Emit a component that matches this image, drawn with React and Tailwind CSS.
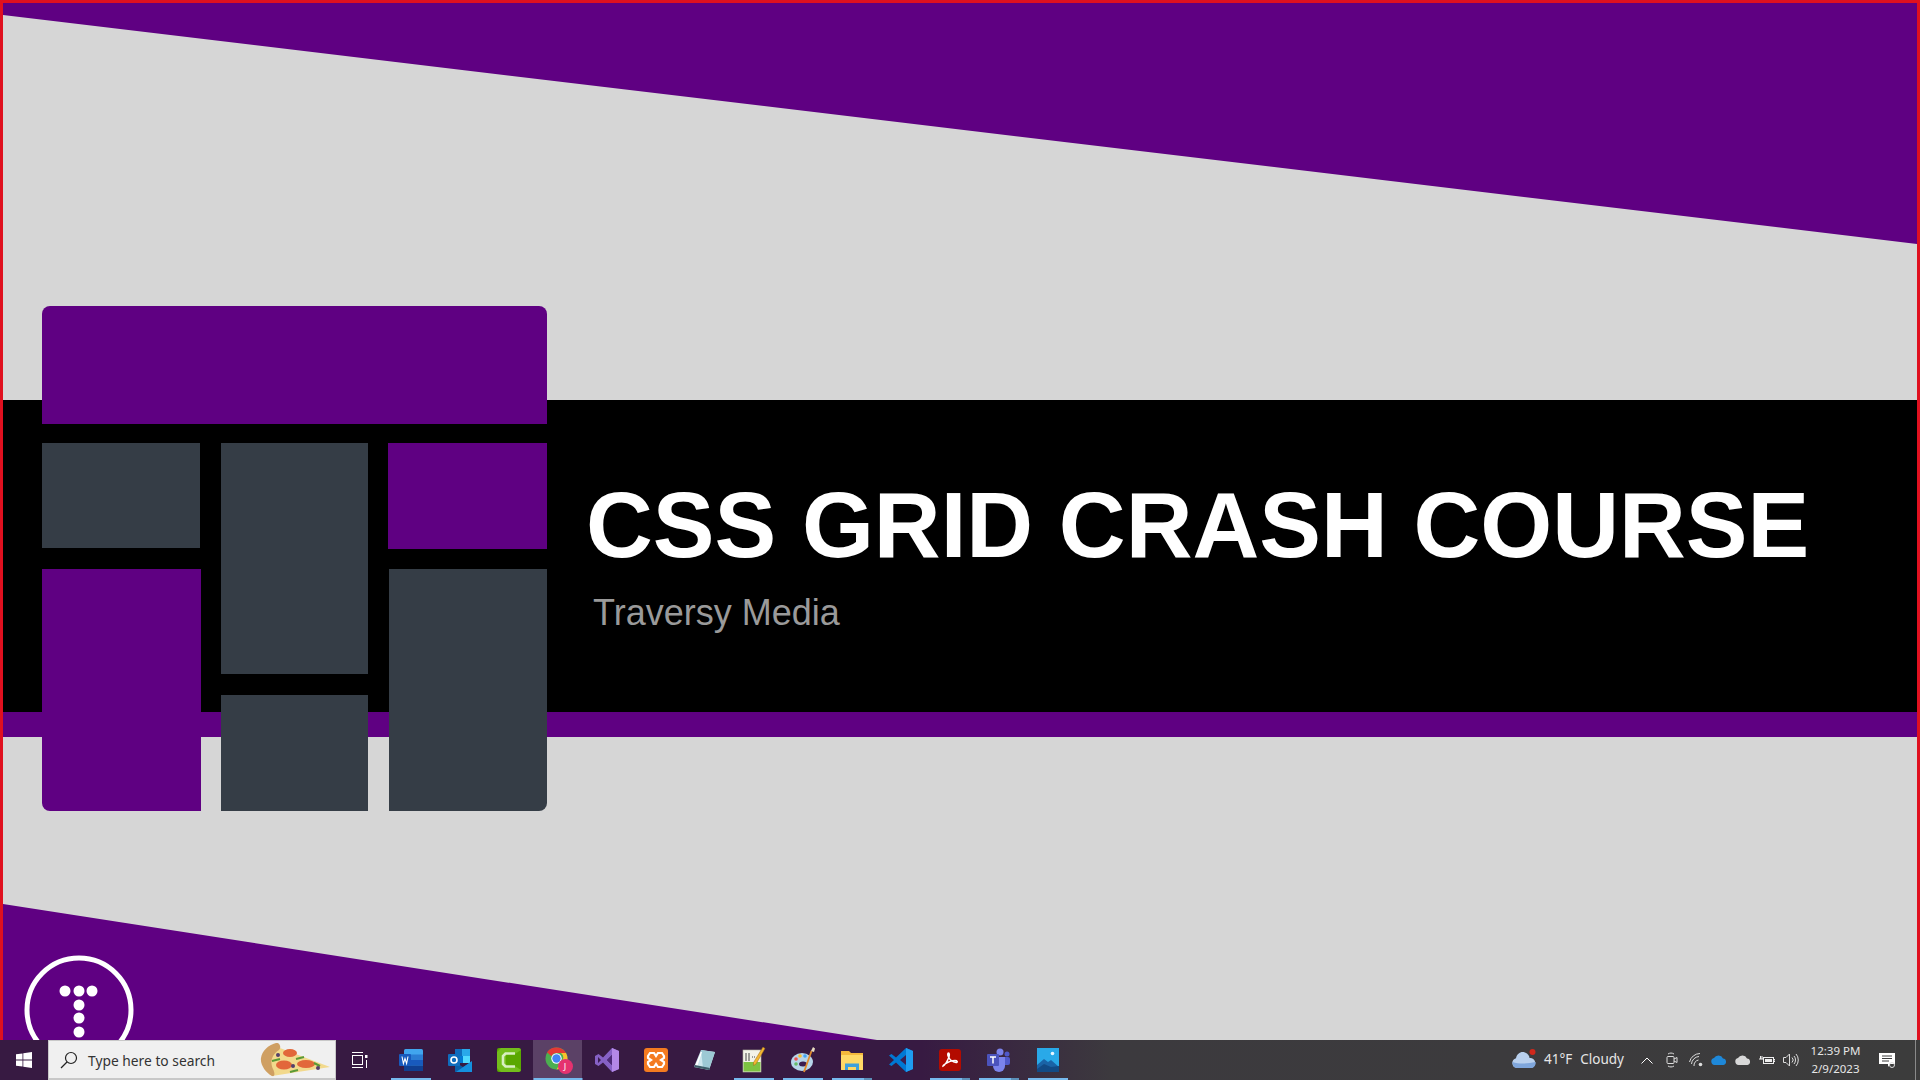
import React from "react";

const Ul = ({ c = "w-[40px]", split }) => (
  <div className={`absolute bottom-0 left-1/2 -translate-x-1/2 flex h-[2px] ${c}`}>
    <div className="flex-1 bg-[#76b9ed]" />
    {split && <div className="w-[8px] bg-[#5b8fb8]" />}
  </div>
);

const Btn = ({ children, line, split, active, w = "w-[49px]" }) => (
  <div className={`relative flex h-full shrink-0 items-center justify-center ${w} ${active ? "bg-[#5b4166]" : ""}`}>
    {children}
    {line && <Ul split={split} c={active ? "w-full" : "w-[40px]"} />}
  </div>
);

const Word = () => (
  <svg width="24" height="22" viewBox="0 0 24 22">
    <rect x="5" y="0" width="19" height="22" rx="1.5" fill="#41a5ee" />
    <rect x="5" y="5.5" width="19" height="5.5" fill="#2b7cd3" />
    <rect x="5" y="11" width="19" height="5.5" fill="#185abd" />
    <rect x="5" y="16.5" width="19" height="5.5" fill="#103f91" />
    <rect x="0" y="5" width="12" height="12" rx="1" fill="#185abd" />
    <path d="M2 7.5l1.4 7 1.6-5 1.6 5 1.4-7" transform="translate(1 0)" fill="none" stroke="#fff" strokeWidth="1.1" />
  </svg>
);
const Outlook = () => (
  <svg width="24" height="23" viewBox="0 0 24 23">
    <rect x="7" y="0" width="15" height="14" fill="#0f6cbd" />
    <rect x="14" y="0" width="8" height="7" fill="#28a8ea" />
    <rect x="7" y="7" width="8" height="7" fill="#0078d4" />
    <rect x="15" y="7" width="7" height="7" fill="#50d9ff" />
    <path d="M7 13l8 5 9-5.500V23H7z" fill="#0a5ea8" />
    <path d="M24 12v11H8z" fill="#1490df" />
    <rect x="0" y="5" width="12" height="12" rx="1" fill="#0f6cbd" />
    <circle cx="6" cy="11" r="3" fill="none" stroke="#fff" strokeWidth="1.600" />
  </svg>
);
const Camtasia = () => (
  <svg width="24" height="24" viewBox="0 0 24 24">
    <rect width="24" height="24" rx="2" fill="#5aa700" />
    <path d="M4 0h18l2 2-6 4H10l-1 2v8l1 2h8l6 4-2 2H4l-4-4V4z" fill="#73bd1c" />
    <path d="M18 5.500H8.500L6 8v8l2.500 2.500H18" fill="none" stroke="#d9efc2" strokeWidth="2.600" />
  </svg>
);
const Chrome = () => (
  <svg width="26" height="26" viewBox="0 0 26 26">
    <circle cx="11.500" cy="11.500" r="11" fill="#4caf50" />
    <path d="M11.500.5a11 11 0 0 1 9.500 5.500H11.500a5.500 5.500 0 0 0-5 3.200L2 5.200A11 11 0 0 1 11.500.5z" fill="#e53935" />
    <path d="M21 6a11 11 0 0 1-9.500 16.500L16 15a5.500 5.500 0 0 0 0-9z" fill="#fbc02d" />
    <circle cx="11.500" cy="11.500" r="5.200" fill="#fff" />
    <circle cx="11.500" cy="11.500" r="4.200" fill="#4285f4" />
  </svg>
);
const VS = () => (
  <svg width="24" height="24" viewBox="0 0 24 24">
    <path d="M17 0l7 3v18l-7 3-9-9.500-4.500 3.500L0 16V8l3.500-2L8 9.500z" fill="#8661c5" />
    <path d="M17 0l7 3v18l-7 3z" fill="#b388e6" />
    <path d="M17 7l-5 5 5 5zM3 9v6l3-3z" fill="#3a1d50" />
    <path d="M17 7v10l-5-5z" fill="#4d2a78" />
  </svg>
);
const Xampp = () => (
  <svg width="24" height="24" viewBox="0 0 24 24">
    <rect width="24" height="24" rx="3" fill="#f47b20" />
    <path d="M6 5h4l2 3 2-3h4l2 3v2l-3 2 3 2v2l-2 3h-4l-2-3-2 3H6l-2-3v-2l3-2-3-2V8z" fill="none" stroke="#fff" strokeWidth="2.200" />
  </svg>
);
const Notes = () => (
  <svg width="24" height="24" viewBox="0 0 24 24">
    <path d="M8 2l14 2-6 18L1 19z" fill="#cde7ee" />
    <path d="M8 2l14 2-6 18-6-2z" fill="#9cc9d4" />
    <path d="M2 18l6-14 1 0-5 15z" fill="#fff" />
    <path d="M1 19l15 3 1-2-15-3z" fill="#3c5e69" />
  </svg>
);
const Notepad = () => (
  <svg width="24" height="26" viewBox="0 0 24 26">
    <rect x="1" y="3" width="18" height="22" fill="#f3f3e8" stroke="#b5b5a0" strokeWidth="0.600" />
    <rect x="1.500" y="15" width="17" height="9.500" fill="#7dc242" />
    <path d="M4 6v8M7 6v8" stroke="#444" strokeWidth="1" />
    <path d="M10 10h4" stroke="#444" strokeWidth="1" strokeDasharray="1 1" />
    <path d="M21 0l2 1.500L14 17l-2.500 1.500 0-3z" fill="#f2b632" stroke="#9c6a18" strokeWidth="0.500" />
  </svg>
);
const Paint = () => (
  <svg width="24" height="26" viewBox="0 0 24 26">
    <ellipse cx="11" cy="15" rx="11" ry="9" fill="#b7d5ea" />
    <ellipse cx="12" cy="17" rx="4" ry="2.500" fill="#3a1d50" />
    <circle cx="5" cy="12" r="1.800" fill="#ef5350" />
    <circle cx="9" cy="9" r="1.800" fill="#fbc02d" />
    <circle cx="5" cy="17" r="1.800" fill="#66bb6a" />
    <circle cx="14" cy="9" r="1.800" fill="#42a5f5" />
    <path d="M20.500 4L13 25" stroke="#e08a2c" strokeWidth="1.800" />
    <path d="M20 4l2-4 2 1.500-1 3.500z" fill="#e8dcc0" />
  </svg>
);
const Folder = () => (
  <svg width="22" height="20" viewBox="0 0 22 20">
    <path d="M0 1h8l2 2h12v3H0z" fill="#f5b93c" />
    <rect y="5" width="22" height="15" rx="0.500" fill="#ffd966" />
    <path d="M4 20v-6.500h14V20h-3v-3H7v3z" fill="#3fa1dc" />
  </svg>
);
const VSCode = () => (
  <svg width="24" height="24" viewBox="0 0 24 24">
    <path d="M17 0l7 3v18l-7 3-10-9.500L2.500 18 0 16.500 5 12 0 7.500 2.500 6 7 9.500z" fill="#0078d4" />
    <path d="M17 0l7 3v18l-7 3z" fill="#1f9cf0" />
    <path d="M17 7v10l-6-5z" fill="#3a1d50" />
  </svg>
);
const Acrobat = () => (
  <svg width="22" height="22" viewBox="0 0 22 22">
    <rect width="22" height="22" rx="3" fill="#b30b00" />
    <path d="M4 17c2-1 4-4 6-9 .5-2 .5-4-.5-4s-1 2 0 4c1.500 3 3.500 5 7.500 5.500 2 0 1.500-2-1-2-3 0-7 1.500-10 3.500-1 .8-2 1.500-2 2z" fill="none" stroke="#fff" strokeWidth="1.500" />
  </svg>
);
const Teams = () => (
  <svg width="24" height="24" viewBox="0 0 24 24">
    <circle cx="13" cy="4" r="3.500" fill="#7b83eb" />
    <circle cx="20" cy="6" r="2.500" fill="#5059c9" />
    <rect x="15" y="9" width="8" height="8" rx="2" fill="#5059c9" />
    <path d="M6 9h12v9a6 6 0 0 1-12 0z" fill="#7b83eb" />
    <rect x="0" y="6" width="12" height="12" rx="1" fill="#4b53bc" />
    <path d="M3 9h6M6 9v6.500" stroke="#fff" strokeWidth="1.500" />
  </svg>
);
const Photos = () => (
  <svg width="22" height="24" viewBox="0 0 22 24">
    <rect width="22" height="24" fill="#29a9e8" />
    <circle cx="15.500" cy="5.500" r="1.800" fill="#e8f6ff" />
    <path d="M0 17l7-6 4 3 3-2 8 7v5H0z" fill="#1a63a6" />
    <path d="M0 21l7-5 7 3 8-1v6H0z" fill="#124a85" />
  </svg>
);
const Pizza = () => (
  <svg width="72" height="34" viewBox="0 0 72 34">
    <path d="M12 2l58 22-58 9C4 28 0 18 3 11z" fill="#f2d98c" />
    <path d="M16 0c-8 2-14 8-15 15-1 7 5 15 11 18 3 1 3-3 1-7-3-6-2-14 6-19 3-3 0-8-3-7z" fill="#cf9f62" />
    <ellipse cx="30" cy="10" rx="7" ry="4" fill="#e2673a" />
    <ellipse cx="24" cy="22" rx="8" ry="4.500" fill="#e2673a" />
    <ellipse cx="46" cy="21" rx="9" ry="4" fill="#e2673a" />
    <path d="M12 18l8-2M36 16l8-2M30 29l8-2M54 20l6 3" stroke="#5a9a35" strokeWidth="2" />
    <circle cx="18" cy="12" r="2" fill="#54406a" />
    <circle cx="33" cy="23" r="2" fill="#54406a" />
    <circle cx="58" cy="25" r="2" fill="#54406a" />
  </svg>
);

export default function App() {
  return (
    <div className="flex h-[1080px] w-[1920px] flex-col overflow-hidden font-['Noto_Sans',sans-serif]">
      {/* slide */}
      <div className="relative flex h-[1040px] shrink-0 flex-col overflow-hidden border-x-[3px] border-t-[3px] border-[#e0101f] bg-[#d6d6d6]">
        <div className="absolute inset-x-0 top-0 h-[241px] bg-[#5f0082] [clip-path:polygon(0_0,100%_0,100%_100%,0_12px)]" />
        <div className="h-[397px] shrink-0" />
        <div className="flex h-[312px] shrink-0 flex-col bg-black pl-[583px] pt-[75px] font-['Liberation_Sans',sans-serif]">
          <h1 className="text-[92.5px] font-bold leading-[100px] text-white">CSS GRID CRASH COURSE</h1>
          <p className="ml-[7px] mt-[17px] text-[36px] leading-[42px] text-[#9a9a9a]">Traversy Media</p>
        </div>
        <div className="h-[25px] shrink-0 bg-[#5f0082]" />
        <div className="absolute bottom-0 left-0 h-[136px] w-[874px] bg-[#5f0082] [clip-path:polygon(0_0,100%_100%,0_100%)]" />

        {/* logo */}
        <svg className="absolute left-[21px] top-[952px]" width="112" height="112" viewBox="0 0 112 112">
          <circle cx="55" cy="55" r="52" fill="none" stroke="#fff" strokeWidth="5" />
          <g fill="#fff">
            <circle cx="41" cy="36" r="5.500" />
            <circle cx="55" cy="36" r="5.500" />
            <circle cx="68" cy="36" r="5.500" />
            <circle cx="55" cy="50" r="5.500" />
            <circle cx="55" cy="63" r="5.500" />
            <circle cx="55" cy="77" r="5.500" />
          </g>
        </svg>

        {/* grid illustration */}
        <div className="absolute left-[39px] top-[303px] flex w-[505px] flex-col gap-[19px]">
          <div className="h-[118px] rounded-t-[8px] bg-[#5f0082]" />
          <div className="flex gap-[20px]">
            <div className="flex w-[159px] flex-col gap-[21px]">
              <div className="h-[105px] w-[158px] bg-[#353d46]" />
              <div className="h-[242px] rounded-bl-[8px] bg-[#5f0082]" />
            </div>
            <div className="flex w-[147px] flex-col gap-[21px]">
              <div className="h-[231px] bg-[#353d46]" />
              <div className="h-[116px] bg-[#353d46]" />
            </div>
            <div className="flex w-[159px] flex-col gap-[20px]">
              <div className="h-[106px] bg-[#5f0082]" />
              <div className="ml-[1px] h-[242px] rounded-br-[8px] bg-[#353d46]" />
            </div>
          </div>
        </div>
      </div>

      {/* taskbar */}
      <div className="flex h-[40px] shrink-0 items-center bg-[linear-gradient(90deg,#371a42_0%,#371a42_48%,#3c3a3e_58%,#3c3c3c_100%)] text-white">
        <div className="flex h-full w-[48px] shrink-0 items-center justify-center">
          <svg width="16" height="16" viewBox="0 0 16 16" fill="#fff">
            <path d="M0 2.300l6.500-.9v6.200H0zM7.300 1.300L16 0v7.600H7.300zM0 8.400h6.500v6.200L0 13.700zM7.300 8.400H16V16l-8.700-1.300z" />
          </svg>
        </div>
        <div className="flex h-full w-[288px] shrink-0 items-center border border-b-2 border-[#c8c8c8] bg-[#f0f0f0] pl-[11px] text-[#333]">
          <svg width="18" height="18" viewBox="0 0 18 18" fill="none" stroke="#222" strokeWidth="1.200">
            <circle cx="11" cy="7" r="5.500" />
            <path d="M7 11l-6 6" />
          </svg>
          <span className="ml-[10px] mt-[2px] text-[13.800px] leading-none">Type here to search</span>
          <div className="ml-auto mr-[3px] flex items-center">
            <Pizza />
          </div>
        </div>
        <Btn w="w-[50px]">
          <svg className="mr-[3px]" width="16" height="16" viewBox="0 0 16 16" fill="none" stroke="#fff" strokeWidth="1">
            <path d="M0 .5h11M0 15.500h11" />
            <rect x=".5" y="3.500" width="10" height="9" />
            <rect x="13" y="3" width="2.500" height="3" fill="#fff" stroke="none" />
            <path d="M14.500 8v8" />
          </svg>
        </Btn>
        <Btn line><Word /></Btn>
        <Btn><Outlook /></Btn>
        <Btn><Camtasia /></Btn>
        <Btn active line>
          <div className="relative h-[26px] w-[26px]">
            <Chrome />
            <div className="absolute bottom-[-1px] right-[-2px] flex h-[15px] w-[15px] items-center justify-center rounded-full bg-[#e5326f] text-[9px] leading-none text-white">J</div>
          </div>
        </Btn>
        <Btn><VS /></Btn>
        <Btn><Xampp /></Btn>
        <Btn><Notes /></Btn>
        <Btn line><Notepad /></Btn>
        <Btn line><Paint /></Btn>
        <Btn line split><Folder /></Btn>
        <Btn><VSCode /></Btn>
        <Btn line split><Acrobat /></Btn>
        <Btn line split><Teams /></Btn>
        <Btn line><Photos /></Btn>

        <div className="ml-auto flex h-full items-center">
          <svg width="26" height="22" viewBox="0 0 26 22">
            <path d="M6 19a5 5 0 0 1-1-9.800C6 4.500 10 2 14 3.500c3 1 4.500 3.500 4.500 5.500a5 5 0 0 1 1.500 10z" fill="#b9d0ee" />
            <path d="M1.500 13c6 2 15 2 23 0 .5 3-1.500 6-4.500 6H6c-3 0-4.500-3-4.500-6z" fill="#7fa6dc" />
            <circle cx="21.500" cy="3" r="3" fill="#d0281c" />
          </svg>
          <span className="ml-[7px] text-[13.500px] leading-none text-[#e6e6e6]">41°F</span>
          <span className="ml-[8px] text-[13.500px] leading-none text-[#e6e6e6]">Cloudy</span>
          <svg className="ml-[17px]" width="12" height="7" viewBox="0 0 12 7" fill="none" stroke="#fff" strokeWidth="1">
            <path d="M.5 6.500L6 1l5.500 5.500" />
          </svg>
          <svg className="ml-[13px]" width="12" height="16" viewBox="0 0 12 16" fill="none" stroke="#ddd" strokeWidth="1">
            <rect x="1" y="4.500" width="7" height="7" rx="1" />
            <path d="M8 7l3-1.500v5L8 9" />
            <path d="M2 2c2-1.300 4-1.300 6 0M2 14c2 1.300 4 1.300 6 0" />
          </svg>
          <svg className="ml-[11px]" width="14" height="14" viewBox="0 0 14 14" fill="none" stroke="#ddd" strokeWidth="1">
            <path d="M.5 9A11 11 0 0 1 11 .5M2.500 11A8 8 0 0 1 10 3.500M5 13A5.500 5.500 0 0 1 9.500 7" />
            <circle cx="11.500" cy="11.500" r="1.800" fill="#ddd" stroke="none" />
          </svg>
          <svg className="ml-[8px]" width="16" height="10" viewBox="0 0 16 10">
            <path d="M3.500 10a3.500 3.500 0 0 1-.5-6.900A5 5 0 0 1 12 3.500a3.300 3.300 0 0 1 .5 6.500z" fill="#1e88d9" />
          </svg>
          <svg className="ml-[8px]" width="16" height="10" viewBox="0 0 16 10">
            <path d="M3.500 10a3.500 3.500 0 0 1-.5-6.900A5 5 0 0 1 12 3.500a3.300 3.300 0 0 1 .5 6.500z" fill="#d8d8d8" />
          </svg>
          <svg className="ml-[8px]" width="16" height="10" viewBox="0 0 16 10" fill="none" stroke="#eee" strokeWidth="1">
            <rect x="4.500" y="2.500" width="10" height="6" />
            <rect x="6" y="4" width="7" height="3" fill="#eee" stroke="none" />
            <path d="M15 4.500h1v2h-1M0 4h4M1.500 1v3M3 1v3" />
          </svg>
          <svg className="ml-[8px]" width="16" height="14" viewBox="0 0 16 14" fill="none" stroke="#ddd" strokeWidth="1">
            <path d="M.5 4.500h2.500L6.500 1v12L3 9.500H.5zM9 4.500a3.500 3.500 0 0 1 0 5M11 3a6 6 0 0 1 0 8M13 1a9 9 0 0 1 0 12" />
          </svg>
          <div className="ml-[13px] flex w-[47px] flex-col items-center text-[11.500px] leading-[18px] text-[#e6e6e6]">
            <span className="whitespace-nowrap">12:39 PM</span>
            <span className="whitespace-nowrap">2/9/2023</span>
          </div>
          <svg className="ml-[20px]" width="16" height="15" viewBox="0 0 16 15">
            <path d="M0 0h16v11h-5l-2 3v-3H0z" fill="#fff" />
            <path d="M3 3h10M3 5.500h10M3 8h7" stroke="#3c3c3c" strokeWidth="1" />
            <circle cx="13" cy="12" r="2.500" fill="none" stroke="#ddd" strokeWidth="1" />
          </svg>
          <div className="ml-[20px] h-full w-[1px] bg-[#8a8a8a]" />
          <div className="w-[4px]" />
        </div>
      </div>
    </div>
  );
}
